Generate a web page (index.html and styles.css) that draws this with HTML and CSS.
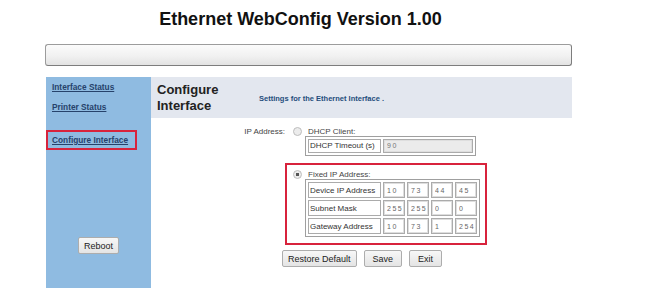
FILE: index.html
```html
<!DOCTYPE html>
<html lang="en">
<head>
    <meta charset="UTF-8">
    <title>Ethernet WebConfig</title>
    <link rel="stylesheet" href="styles.css">
</head>
<body>
    <div class="page">
        <h1 class="title">Ethernet WebConfig Version 1.00</h1>
        <div class="topbar"></div>

        <div class="frame">
            <nav class="side">
                <a href="#" class="link first">Interface Status</a>
                <a href="#" class="link">Printer Status</a>
                <div class="mark"><a href="#" class="link">Configure Interface</a></div>
                <button type="button" class="btn reboot">Reboot</button>
            </nav>

            <div class="content">
                <div class="head">
                    <h2>Configure<br>Interface</h2>
                    <p>Settings for the Ethernet Interface .</p>
                </div>

                <form class="form">
                    <div class="ip-label">IP Address:</div>
                    <div class="choices">
                        <div class="choice dhcp">
                            <label class="opt"><span class="radio"></span>DHCP Client:</label>
                            <table class="grid small">
                                <tr>
                                    <td class="name">DHCP Timeout (s)</td>
                                    <td class="in"><input type="text" class="wide" value="90" disabled></td>
                                </tr>
                            </table>
                        </div>
                        <div class="choice fixed">
                            <label class="opt"><span class="radio on"></span>Fixed IP Address:</label>
                            <table class="grid">
                                <tr>
                                    <td class="name">Device IP Address</td>
                                    <td class="in"><input type="text" value="10"></td>
                                    <td class="in"><input type="text" value="73"></td>
                                    <td class="in"><input type="text" value="44"></td>
                                    <td class="in"><input type="text" value="45"></td>
                                </tr>
                                <tr>
                                    <td class="name">Subnet Mask</td>
                                    <td class="in"><input type="text" value="255"></td>
                                    <td class="in"><input type="text" value="255"></td>
                                    <td class="in"><input type="text" value="0"></td>
                                    <td class="in"><input type="text" value="0"></td>
                                </tr>
                                <tr>
                                    <td class="name">Gateway Address</td>
                                    <td class="in"><input type="text" value="10"></td>
                                    <td class="in"><input type="text" value="73"></td>
                                    <td class="in"><input type="text" value="1"></td>
                                    <td class="in"><input type="text" value="254"></td>
                                </tr>
                            </table>
                        </div>
                    </div>

                    <div class="actions">
                        <button type="button" class="btn restore">Restore Default</button>
                        <button type="button" class="btn">Save</button>
                        <button type="button" class="btn">Exit</button>
                    </div>
                </form>
            </div>
        </div>
    </div>
</body>
</html>
```

FILE: styles.css
```css
body {
    margin: 0;
    background: #fff;
    font-family: "Liberation Sans", Arial, sans-serif;
    color: #333;
}

.page {
    margin-left: 45px;
    width: 527px;
}

.title {
    margin: 0;
    padding: 8px 16px 0 0;
    font-size: 18px;
    line-height: 22px;
    text-align: center;
    color: #111;
}

.topbar {
    margin-top: 14px;
    height: 20px;
    border: 1px solid #9c9c9c;
    border-right-color: #7d7d7d;
    border-bottom-color: #7d7d7d;
    border-radius: 3px;
    background: linear-gradient(#fbfbfb, #f1f1f1 55%, #e3e3e3);
}

.frame {
    display: flex;
    margin: 11px 0 0 1px;
    height: 211px;
}

/* left menu */
.side {
    display: flex;
    flex-direction: column;
    align-items: flex-start;
    width: 105px;
    background: #8fbbe1;
}

.link {
    display: block;
    font-size: 8.3px;
    line-height: 10px;
    font-weight: bold;
    color: #26426b;
    padding-left: 6px;
}

.link.first {
    margin-top: 5px;
}

.side .link + .link {
    margin-top: 10px;
}

.mark {
    margin-top: 18px;
    width: 87px;
    padding: 3px 0;
    border: 2px solid #d8233c;
}

.mark .link {
    padding-left: 4px;
}

.btn {
    height: 17px;
    padding: 0 8px;
    font-family: "Liberation Sans", Arial, sans-serif;
    font-size: 9px;
    color: #222;
    background: linear-gradient(#f7f7f7, #e4e4e4);
    border: 1px solid #adadad;
    border-radius: 2px;
}

.reboot {
    align-self: center;
    margin-top: 87px;
    padding: 0 5px;
}

/* right side */
.content {
    flex: 1;
}

.head {
    display: flex;
    align-items: center;
    height: 41px;
    background: #e3e7ef;
}

.head h2 {
    margin: 0;
    width: 102px;
    padding-left: 6px;
    font-size: 13px;
    line-height: 16px;
    color: #222;
}

.head p {
    margin: 2px 0 0 0;
    font-size: 7.5px;
    font-weight: bold;
    color: #234d7c;
}

.form {
    display: grid;
    grid-template-columns: 134px auto;
    padding-top: 8.5px;
    font-size: 8px;
    color: #444;
}

.ip-label {
    line-height: 9px;
    text-align: right;
}

.choice.dhcp {
    padding-left: 2px;
}

.choice.fixed {
    width: 198px;
    margin-top: 7px;
    border: 2px solid #d8233c;
    padding: 5.5px 0 6px 0;
}

.opt {
    display: flex;
    align-items: center;
    line-height: 9px;
    padding-left: 6px;
}

.radio {
    width: 7px;
    height: 7px;
    margin-right: 6px;
    border: 1px solid #bdbdbd;
    border-radius: 50%;
    background: #ececec;
}

.radio.on {
    background: radial-gradient(circle, #555 0 1.6px, #ececec 2px);
}

.grid {
    margin-left: 18px;
    border: 1px solid #9f9f9f;
    border-spacing: 2px;
}

.grid td {
    border: 1px solid #ababab;
    padding: 0;
    height: 14px;
}

.grid.small td {
    height: 12px;
}

.grid .name {
    width: 69px;
    padding: 0 1px;
    white-space: nowrap;
    color: #333;
}

.grid input {
    display: block;
    box-sizing: border-box;
    width: 20px;
    height: 14px;
    padding: 0 0 0 2px;
    border: 1px solid #dedede;
    font-family: "Liberation Sans", Arial, sans-serif;
    font-size: 7px;
    letter-spacing: 1.5px;
    color: #666;
    background: #fff;
}

.grid.small input {
    height: 12px;
}

.grid input.wide {
    width: 88px;
    background: #ebebeb;
    color: #777;
}

.actions {
    grid-column: 1 / 3;
    display: flex;
    gap: 7px;
    margin: 5px 0 0 131px;
}

.restore {
    padding: 0 5px;
}
```
